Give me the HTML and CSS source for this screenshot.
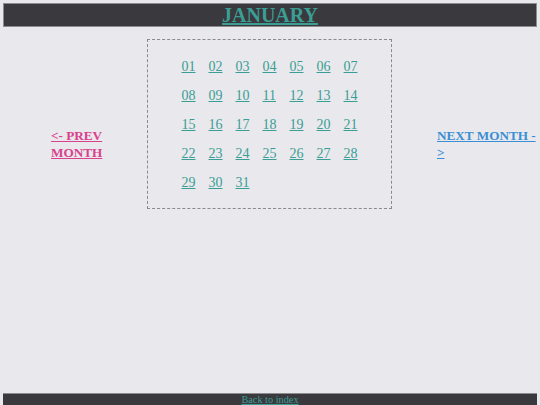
FILE: index.html
```html
<!DOCTYPE html>
<html lang="en">
<head>
    <meta charset="UTF-8">
    <meta name="viewport" content="width=device-width, initial-scale=1.0">
    <title>January</title>
    <link rel="stylesheet" href="styles.css">
</head>
<body>
    <header class="month-bar">
        <h1><a href="#">JANUARY</a></h1>
    </header>

    <main class="month">
        <div class="side prev">
            <a href="#">&lt;- PREV MONTH</a>
        </div>

        <div class="days">
            <a href="#">01</a><a href="#">02</a><a href="#">03</a><a href="#">04</a><a href="#">05</a><a href="#">06</a><a href="#">07</a>
            <a href="#">08</a><a href="#">09</a><a href="#">10</a><a href="#">11</a><a href="#">12</a><a href="#">13</a><a href="#">14</a>
            <a href="#">15</a><a href="#">16</a><a href="#">17</a><a href="#">18</a><a href="#">19</a><a href="#">20</a><a href="#">21</a>
            <a href="#">22</a><a href="#">23</a><a href="#">24</a><a href="#">25</a><a href="#">26</a><a href="#">27</a><a href="#">28</a>
            <a href="#">29</a><a href="#">30</a><a href="#">31</a>
        </div>

        <div class="side next">
            <a href="#">NEXT MONTH -&gt;</a>
        </div>
    </main>

    <footer class="foot">
        <a href="#">Back to index</a>
    </footer>
</body>
</html>
```

FILE: styles.css
```css
html, body { height: 100%; }
body {
    font-family: "Liberation Serif", "Times New Roman", serif;
    margin: 3px 3px 0 3px;
    height: calc(100% - 3px);
    background-color: #e9e8ed;
    display: flex;
    flex-direction: column;
}
a { color: #3a9e94; }

.month-bar {
    background: #3a393d;
    border: 1px solid #8c8b90;
    text-align: center;
}
.month-bar h1 {
    margin: 0;
    font-size: 20px;
    line-height: 22px;
}

.month {
    flex: 1;
    display: grid;
    grid-template-columns: 144px 245px 1fr;
    align-items: start;
    margin-top: 12px;
}
.side {
    padding-top: 88px;
    font-weight: bold;
    font-size: 13.2px;
    line-height: 17px;
}
.prev { padding-left: 48px; padding-right: 20px; }
.prev a { color: #d9418c; }
.next { padding-left: 45px; }
.next a { color: #3a8fd4; }

.days {
    border: 1px dashed #8a898e;
    padding: 19px 0 17px;
    display: grid;
    grid-template-columns: repeat(7, 14px);
    column-gap: 13px;
    row-gap: 13px;
    justify-content: center;
    font-size: 14px;
    line-height: 16px;
}

.foot {
    margin-top: auto;
    background: #3a393d;
    border-top: 1px solid #8c8b90;
    text-align: center;
    font-size: 10.3px;
    line-height: 11px;
}
```
